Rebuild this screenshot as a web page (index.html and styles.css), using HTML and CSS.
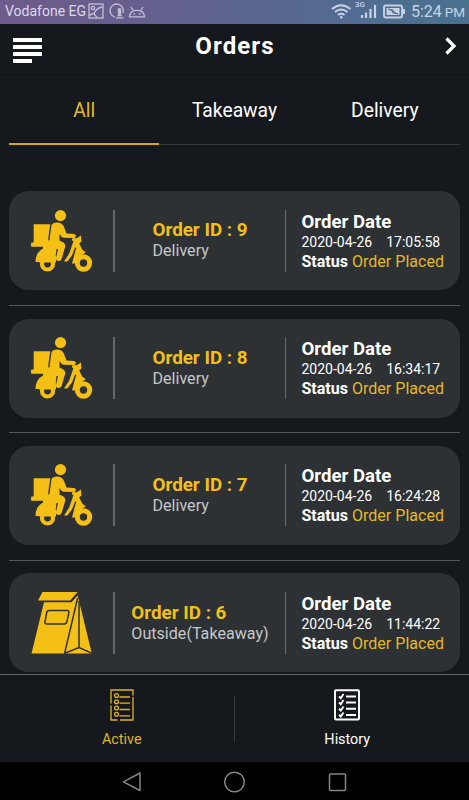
FILE: index.html
```html
<!DOCTYPE html>
<html lang="en">
<head>
<meta charset="utf-8">
<title>Orders</title>
<link rel="stylesheet" href="styles.css">
</head>
<body>
<svg class="defs" width="0" height="0" aria-hidden="true">
  <symbol id="scooter" viewBox="0 0 62 62">
    <g fill="currentColor">
      <circle cx="29.500" cy="5.600" r="5.600"/>
      <path d="M2.700 14.200h16.600L17.700 25l-.7 8H2.700z"/>
      <rect x="0" y="32.500" width="20" height="4.300" rx="1"/>
      <path d="M20.500 15q1.500-3 6-2.500 5 .4 6.500 4.500l2.500 6.500 7.500.4q2.200.6 1.900 2.300-.4 1.900-2.200 1.800l-10.200-.2q-1.500-.2-2.500-1.800l-1.500-2v6.500l3.500 1.700q2.700 1.600 2.200 4.600l-3.600 12.200q-.8 2.500-3.500 2-2.700-.6-2.100-3.200l2-8.800h-1.500L24 52H4.500q0-9.500 7.500-13.500V33l6.500-3z"/>
      <path d="M50 25.500l.4 6-2.200 2 4.800 9.500-2.700 2.500-6-8.500-3.300 8.500-4.700 6h-3.300l5.200-8 4.300-12.500-1.800-.5 1-2.500 4 .3z"/>
      <path d="M45 38.500l4.500.2 5.500 3.500-7 3.800-4.500 7.500h-2.500z"/>
    </g>
    <circle cx="16.500" cy="54" r="5.500" fill="#2d3134" stroke="currentColor" stroke-width="4.200"/>
    <path d="M8 46h17v6.500H8z" fill="currentColor"/>
    <circle cx="52.500" cy="53" r="6.200" fill="none" stroke="currentColor" stroke-width="5"/>
  </symbol>
  <symbol id="bag" viewBox="0 0 62 62">
    <path d="M11.500 0H46.500L39.300 8.500H7z" fill="currentColor"/>
    <path d="M13 10.300h27.500L46.500 3.500 47.800 8 60.800 61.500H.5z" fill="currentColor"/>
    <g fill="none" stroke="#2d3134" stroke-width="1.500">
      <path d="M18.300 18.600h18q2 0 1.600 2l-2 9q-.5 2.400-2.700 2.400H16q-2.400 0-2-2.200l1.600-8.800q.5-2.400 2.700-2.400z"/>
      <path d="M46.600 6L33.500 62M48 9v46.500M33.800 61.300L48 55.500l13.500 6M40 9.300L46 2.500"/>
    </g>
  </symbol>
</svg>
<div class="phone">
  <div class="status">
    <span class="carrier">Vodafone EG</span>
    <svg class="notices" width="58" height="18" viewBox="0 0 58 18" fill="none" stroke="#c3c1d9" stroke-width="1.300">
      <rect x="1" y="2" width="14" height="14"/><circle cx="5" cy="6" r="1.700"/><path d="M1 14q3-3 5-2 2-6 8.500-7M6 12l3 3.500"/>
      <path d="M35 11A6.700 6.700 0 1 0 27 15.200M28 15.800h7.500M29.500 13.500h4"/><path d="M30.500 7h2v5h-2z" fill="#c3c1d9"/>
      <path d="M41.500 14.800q.5-6.500 7.500-6.500t7.500 6.500zM43 5l2.500 4M55 5l-2.500 4M45.500 12h1.500M51 12h1.500"/>
    </svg>
    <svg class="signals" width="77" height="22" viewBox="0 0 77 22" fill="none" stroke="#c6d3e5" stroke-width="1.900">
      <path d="M1 8q9-7.500 18.500 0M4 11q6-5 12.500 0M7 14q3-2.500 6.500 0"/><circle cx="10.200" cy="16.300" r="1.300" fill="#c6d3e5" stroke="none"/>
      <path d="M31 17v-3M35 17v-5.500M39.500 17V8M44 17V4" stroke-width="2.200"/>
      <rect x="53" y="4.500" width="18" height="12" rx="2"/><path d="M73 8v5" stroke-width="2"/><path d="M55.500 7h13v7h-13z" fill="#c6d3e5" stroke="none"/><path d="M57 8l5 1 1 2 4 2-5-1-1-2z" fill="#596d94" stroke="#596d94" stroke-width=".8"/>
    </svg>
    <span class="network">3G</span>
    <span class="clock">5:24 <small>PM</small></span>
  </div>
  <header class="header">
    <svg class="menu" width="30" height="26" viewBox="0 0 30 26" fill="#fff"><path d="M0 0h29v4H0zM0 7h29v4H0zM0 14h29v4H0zM0 21h19v4H0z"/></svg>
    <h1>Orders</h1>
    <svg class="next" width="12" height="18" viewBox="0 0 12 18" fill="none" stroke="#fff" stroke-width="3.200"><path d="M1.500 1.500L9 9l-7.500 7.500"/></svg>
  </header>
  <nav class="tabs">
    <span class="tab selected">All</span><span class="tab">Takeaway</span><span class="tab">Delivery</span>
  </nav>
  <main class="orders">
    <article class="card">
      <div class="pic"><svg class="icon"><use href="#scooter"/></svg></div>
      <div class="order"><div><h2>Order ID : 9</h2><p>Delivery</p></div></div>
      <div class="details"><h3>Order Date</h3><p class="date"><span>2020-04-26</span><span>17:05:58</span></p><p class="state"><b>Status</b> <span>Order Placed</span></p></div>
    </article>
    <article class="card">
      <div class="pic"><svg class="icon"><use href="#scooter"/></svg></div>
      <div class="order"><div><h2>Order ID : 8</h2><p>Delivery</p></div></div>
      <div class="details"><h3>Order Date</h3><p class="date"><span>2020-04-26</span><span>16:34:17</span></p><p class="state"><b>Status</b> <span>Order Placed</span></p></div>
    </article>
    <article class="card">
      <div class="pic"><svg class="icon"><use href="#scooter"/></svg></div>
      <div class="order"><div><h2>Order ID : 7</h2><p>Delivery</p></div></div>
      <div class="details"><h3>Order Date</h3><p class="date"><span>2020-04-26</span><span>16:24:28</span></p><p class="state"><b>Status</b> <span>Order Placed</span></p></div>
    </article>
    <article class="card">
      <div class="pic"><svg class="icon"><use href="#bag"/></svg></div>
      <div class="order"><div><h2>Order ID : 6</h2><p>Outside(Takeaway)</p></div></div>
      <div class="details"><h3>Order Date</h3><p class="date"><span>2020-04-26</span><span>11:44:22</span></p><p class="state"><b>Status</b> <span>Order Placed</span></p></div>
    </article>
  </main>
  <nav class="bottom">
    <div class="item active">
      <svg width="26" height="32" viewBox="0 0 26 32" fill="none" stroke="currentColor" stroke-width="1.300"><path d="M2 14.500V1h22v5.500M24 8v23H11M8.500 31H2V16.500"/><circle cx="7.500" cy="6.500" r="1.900"/><circle cx="7.500" cy="12.700" r="1.900"/><circle cx="7.500" cy="19" r="1.900"/><circle cx="7.500" cy="25.300" r="1.900"/><path d="M10.500 8H21M10.500 14.200H21M10.500 20.500H21M10.500 26.800H21"/></svg>
      <span>Active</span>
    </div>
    <div class="item">
      <svg width="26" height="32" viewBox="0 0 26 32" fill="none" stroke="currentColor" stroke-width="1.900"><rect x="1" y="1.200" width="24" height="29.300" rx="1"/><path d="M5 7.500l1.800 1.700L9.500 5M5 13.500l1.800 1.700L9.500 11M5 19.800l1.800 1.700L9.500 17.500M5 25.800l1.800 1.700L9.500 23.500M12 7.500h10M12 13.500h10M12 19.800h10M12 26h10"/></svg>
      <span>History</span>
    </div>
  </nav>
  <div class="system">
    <svg width="226" height="22" viewBox="0 0 226 22" fill="none" stroke="#858585" stroke-width="1.500"><path d="M18 2v17.500L1.500 10.800z" stroke-linejoin="round"/><circle cx="112.500" cy="11" r="9.800"/><rect x="207.500" y="3" width="16" height="16.500" rx="1"/></svg>
  </div>
</div>
</body>
</html>
```
FILE: styles.css
```css
* { box-sizing: border-box; }
body { margin: 0; font-family: Roboto, sans-serif; background: #15191d; color: #fff; }
h1, h2, h3, p { margin: 0; }
.defs { display: block; height: 0; }
.phone { width: 469px; height: 800px; overflow: hidden; display: flex; flex-direction: column; background: #15191d; }
.status { position: relative; flex: none; height: 24px; display: flex; align-items: center; padding: 0 5px; color: #dbd9ea; background: linear-gradient(90deg, #6d5b8b 0%, #665f8d 30%, #59668f 55%, #506c92 78%, #49728f 100%); }
.carrier { flex: none; font-size: 14px; line-height: 22px; margin-top: -2px; white-space: nowrap; width: 83px; }
.notices { flex: none; margin-top: -3px; }
.signals { flex: none; margin: -1px 0 0 185px; }
.network { position: absolute; left: 355px; top: 0; font-size: 8px; line-height: 9px; font-weight: 500; color: #c6d3e5; }
.clock { margin-left: 3px; font-size: 16px; line-height: 22px; white-space: nowrap; color: #c6d3e5; }
.clock small { font-size: 13.5px; margin-left: -1px; }
.header { flex: none; height: 51px; display: flex; align-items: flex-start; justify-content: space-between; padding: 0 12px 0 13px; border-bottom: 1px solid #111417; }
.menu { margin-top: 14px; }
.header h1 { font-size: 24px; line-height: 28px; font-weight: 700; letter-spacing: 1.1px; margin: 8px 0 0 -18px; }
.next { margin-top: 13px; }
.tabs { flex: none; height: 70px; margin: 0 9px; display: grid; grid-template-columns: repeat(3, 1fr); box-shadow: inset 0 -1px #363a3d; }
.tab { text-align: center; font-size: 19.3px; line-height: 24px; padding-top: 24px; }
.tab.selected { color: #e3b82d; border-bottom: 2px solid #d3a90b; }
.orders { flex: none; height: 530px; padding: 46.2px 9px 0 9px; overflow: hidden; border-bottom: 1px solid #606366; }
.card { height: 99px; display: flex; align-items: center; background: #2d3134; border-radius: 20px; }
.card + .card { position: relative; margin-top: 28.4px; }
.card + .card::before { content: ""; position: absolute; left: 0; right: 0; top: -13.5px; height: 1px; background: #515558; }
.pic { width: 106px; height: 62px; padding-left: 22px; border-right: 2px solid #63676a; }
.icon { display: block; width: 62px; height: 62px; color: #f5c016; }
.order { width: 171px; height: 62px; display: flex; justify-content: center; border-right: 1px solid #696c6f; }
.order h2 { font-size: 18.8px; line-height: 21px; font-weight: 700; color: #f5c016; margin-top: 10.8px; white-space: nowrap; }
.order p { font-size: 16.1px; line-height: 19.5px; color: #c5c7c9; white-space: nowrap; }
.details { padding-left: 15.5px; white-space: nowrap; }
.details h3 { font-size: 18.6px; line-height: 21px; font-weight: 700; margin-top: 2px; }
.date { display: flex; gap: 14px; font-size: 14px; line-height: 19px; }
.state { font-size: 16.05px; line-height: 20px; }
.state span { color: #e5b82c; }
.bottom { position: relative; flex: none; height: 87px; padding: 0 9px; display: grid; grid-template-columns: 1fr 1fr; }
.bottom::after { content: ""; position: absolute; left: 234px; top: 21px; width: 1px; height: 46px; background: #34383b; }
.item { display: flex; flex-direction: column; align-items: center; padding-top: 14px; font-size: 14.4px; }
.item svg { display: block; }
.item span { line-height: 18px; margin-top: 10px; }
.item.active { color: #dfb329; }
.system { flex: 1; display: flex; justify-content: center; padding-top: 9px; background: #000; }
```
